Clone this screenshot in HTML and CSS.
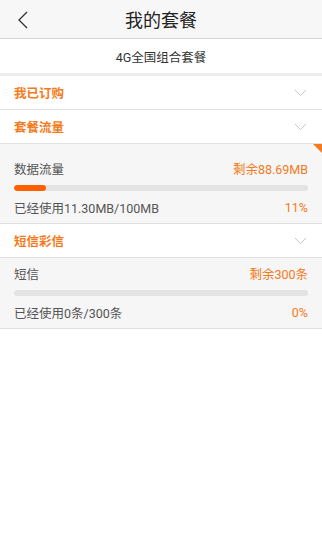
FILE: index.html
```html
<!DOCTYPE html>
<html lang="zh">
<head>
<meta charset="utf-8">
<link rel="stylesheet" href="styles.css">
</head>
<body>
<div class="header">
  <svg class="back" width="12" height="18" viewBox="0 0 12 18"><path d="M10 1 L2 9 L10 17" fill="none" stroke="#333" stroke-width="1.3"/></svg>
  <div class="title">我的套餐</div>
</div>
<div class="plan-name">4G全国组合套餐</div>
<div class="section-head">
  <span>我已订购</span>
  <svg class="chev" width="13" height="8" viewBox="0 0 13 8"><path d="M1 1 L6.5 6.5 L12 1" fill="none" stroke="#c8c8c8" stroke-width="1"/></svg>
</div>
<div class="section-head">
  <span>套餐流量</span>
  <svg class="chev" width="13" height="8" viewBox="0 0 13 8"><path d="M1 1 L6.5 6.5 L12 1" fill="none" stroke="#c8c8c8" stroke-width="1"/></svg>
</div>
<div class="detail flagged">
  <div class="line"><span>数据流量</span><span class="orange">剩余88.69MB</span></div>
  <div class="bar"><div class="fill" style="width:11%"></div></div>
  <div class="line"><span>已经使用11.30MB/100MB</span><span class="orange">11%</span></div>
</div>
<div class="section-head">
  <span>短信彩信</span>
  <svg class="chev" width="13" height="8" viewBox="0 0 13 8"><path d="M1 1 L6.5 6.5 L12 1" fill="none" stroke="#c8c8c8" stroke-width="1"/></svg>
</div>
<div class="detail sms">
  <div class="line"><span>短信</span><span class="orange">剩余300条</span></div>
  <div class="bar"><div class="fill" style="width:0%"></div></div>
  <div class="line"><span>已经使用0条/300条</span><span class="orange">0%</span></div>
</div>
</body>
</html>
```

FILE: styles.css
```css
html, body {
  margin: 0;
  padding: 0;
  background: #ffffff;
  font-family: Roboto, "Noto Sans CJK SC", sans-serif;
  font-size: 12.5px;
  color: #555555;
}
.header {
  height: 38px;
  background: #f7f7f7;
  border-bottom: 1px solid #d6d6d6;
  display: flex;
  align-items: center;
  justify-content: center;
  position: relative;
}
.back {
  position: absolute;
  left: 17px;
  top: 11px;
}
.title {
  font-size: 18px;
  color: #222222;
}
.plan-name {
  height: 34px;
  display: flex;
  align-items: center;
  justify-content: center;
  color: #333333;
  font-size: 12.5px;
  border-bottom: 3px solid #ececec;
}
.section-head {
  height: 33px;
  padding: 0 14px;
  display: flex;
  align-items: center;
  justify-content: space-between;
  color: #f47a20;
  font-weight: bold;
  border-bottom: 1px solid #e2e2e2;
}
.chev {
  margin-right: 1px;
}
.detail {
  background: #f6f6f6;
  padding: 14px 14px 6px;
  border-bottom: 1px solid #e0e0e0;
  position: relative;
}
.flagged::after {
  content: "";
  position: absolute;
  right: 0;
  top: 0;
  border-top: 9px solid #f47a20;
  border-left: 9px solid transparent;
}
.sms {
  padding-top: 5px;
}
.line {
  display: flex;
  justify-content: space-between;
  align-items: center;
  height: 20px;
  color: #555555;
}
.orange {
  color: #f47a20;
}
.bar {
  height: 6px;
  border-radius: 3px;
  background: #e3e3e3;
  margin: 7px 0 6px;
  overflow: hidden;
}
.fill {
  height: 100%;
  background: #ff6000;
  border-radius: 3px;
}
```
